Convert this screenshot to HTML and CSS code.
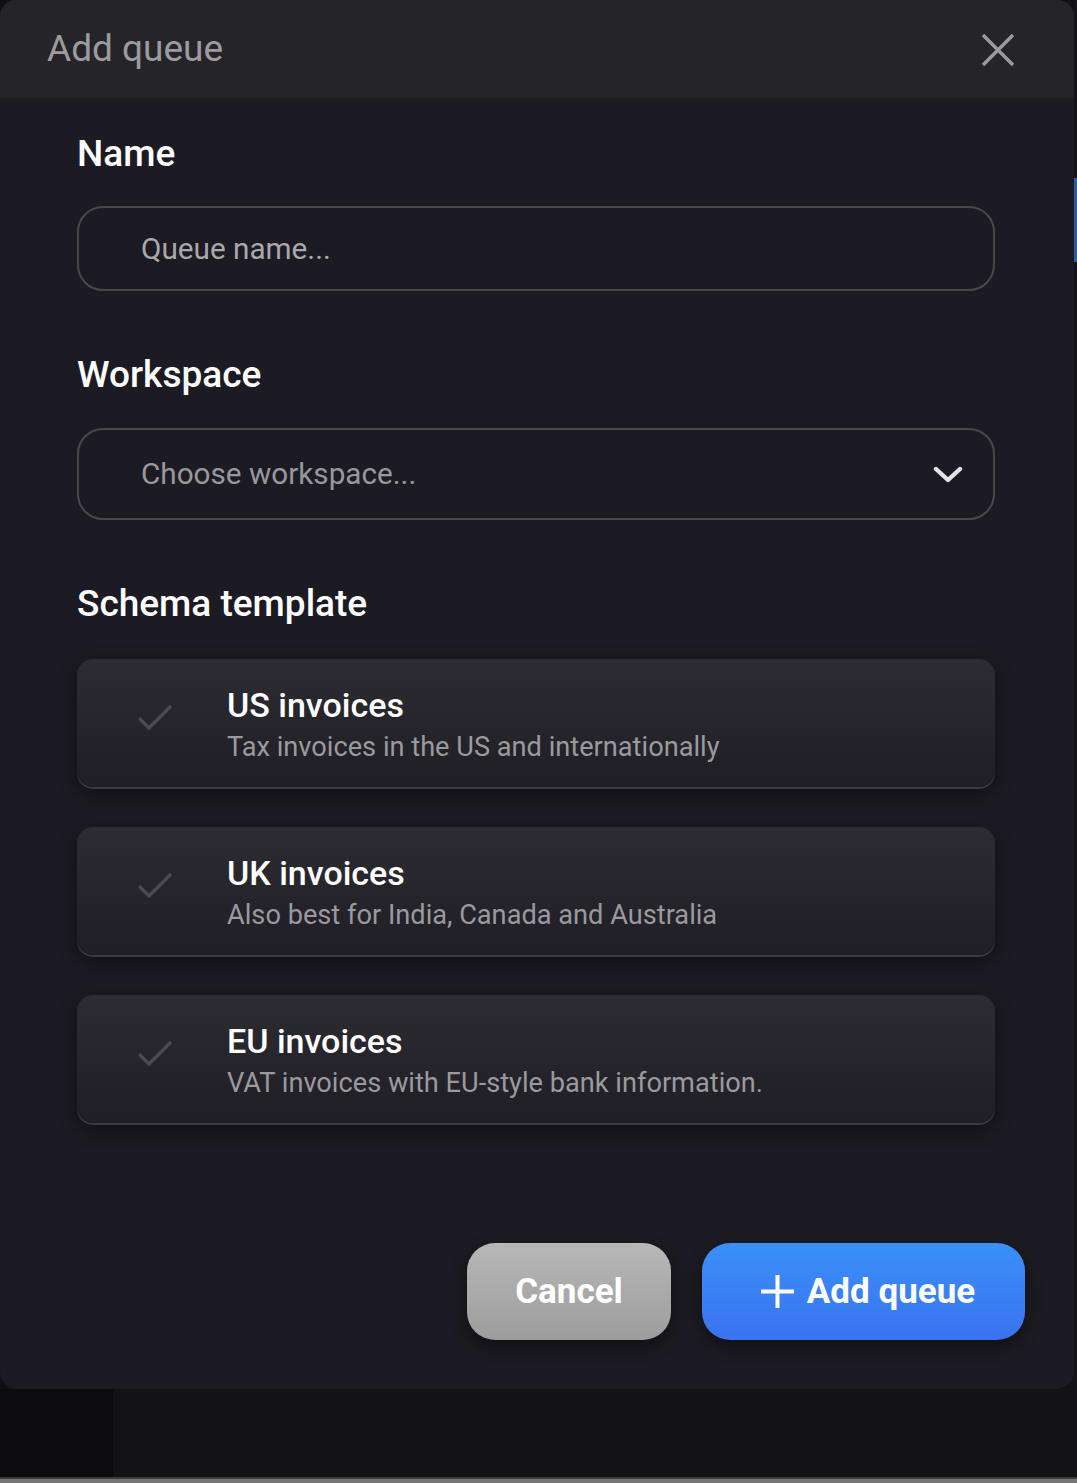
FILE: index.html
```html
<!DOCTYPE html>
<html lang="en">
<head>
<meta charset="utf-8">
<title>Add queue</title>
<link rel="stylesheet" href="styles.css">
</head>
<body>
<div class="screen">
  <div class="top-row">
    <div class="modal">
      <div class="modal-header">
        <h1 class="modal-title">Add queue</h1>
        <button class="close-btn" aria-label="Close">
          <svg width="34" height="34" viewBox="0 0 34 34"><path d="M2 2 L32 32 M32 2 L2 32" stroke="#9b9b9e" stroke-width="3.4" fill="none" stroke-linecap="butt"/></svg>
        </button>
      </div>
      <div class="modal-body">
        <label class="field-label label-name">Name</label>
        <div class="text-input"><span class="placeholder">Queue name...</span></div>

        <label class="field-label label-workspace">Workspace</label>
        <div class="text-input select-input">
          <span class="placeholder">Choose workspace...</span>
          <svg class="chevron" width="30" height="18" viewBox="0 0 30 18"><path d="M3 3 L15 14 L27 3" stroke="#e4e4e6" stroke-width="4.4" fill="none" stroke-linecap="round" stroke-linejoin="round"/></svg>
        </div>

        <label class="field-label label-schema">Schema template</label>
        <div class="cards">
          <div class="card">
            <svg class="check" width="36" height="30" viewBox="0 0 36 30"><path d="M2 15 L12 25 L34 3" stroke="#4a4a50" stroke-width="3.2" fill="none"/></svg>
            <div class="card-text">
              <div class="card-title">US invoices</div>
              <div class="card-sub">Tax invoices in the US and internationally</div>
            </div>
          </div>
          <div class="card">
            <svg class="check" width="36" height="30" viewBox="0 0 36 30"><path d="M2 15 L12 25 L34 3" stroke="#4a4a50" stroke-width="3.2" fill="none"/></svg>
            <div class="card-text">
              <div class="card-title">UK invoices</div>
              <div class="card-sub">Also best for India, Canada and Australia</div>
            </div>
          </div>
          <div class="card">
            <svg class="check" width="36" height="30" viewBox="0 0 36 30"><path d="M2 15 L12 25 L34 3" stroke="#4a4a50" stroke-width="3.2" fill="none"/></svg>
            <div class="card-text">
              <div class="card-title">EU invoices</div>
              <div class="card-sub">VAT invoices with EU-style bank information.</div>
            </div>
          </div>
        </div>
      </div>
      <div class="modal-footer">
        <button class="btn btn-cancel">Cancel</button>
        <button class="btn btn-primary">
          <svg class="plus" width="35" height="35" viewBox="0 0 35 35"><path d="M17.5 1 V34 M1 17.5 H34" stroke="#ffffff" stroke-width="4" fill="none"/></svg>
          <span>Add queue</span>
        </button>
      </div>
    </div>
    <div class="edge"><div class="edge-blue"></div></div>
  </div>
  <div class="bottom">
    <div class="bottom-left"></div>
    <div class="bottom-rest"></div>
  </div>
  <div class="bottom-line"></div>
</div>
</body>
</html>
```

FILE: styles.css
```css
* { box-sizing: border-box; }
html, body {
  margin: 0;
  padding: 0;
  background: #111114;
  font-family: Roboto, "Liberation Sans", Arial, sans-serif;
}
.screen {
  width: 1077px;
  height: 1483px;
  display: flex;
  flex-direction: column;
  overflow: hidden;
}
.top-row {
  display: flex;
  height: 1389px;
  flex: none;
}
.modal {
  width: 1074px;
  height: 1389px;
  flex: none;
  background: #1c1b23;
  border-radius: 16px 16px 18px 18px;
  display: flex;
  flex-direction: column;
  overflow: hidden;
}
.edge {
  flex: 1;
  background: #151419;
  padding-top: 178px;
}
.edge-blue {
  height: 84px;
  background: #2c5c9e;
}
.modal-header {
  height: 98px;
  flex: none;
  background: #252429;
  display: flex;
  align-items: center;
  justify-content: space-between;
  padding: 0 59px 0 47px;
}
.modal-title {
  margin: 0;
  font-size: 37px;
  font-weight: 400;
  color: #9c9c9f;
  line-height: 40px;
  margin-top: 0;
}
.close-btn {
  background: none;
  border: 0;
  padding: 0;
  width: 34px;
  height: 34px;
  display: flex;
  margin-top: 1px;
}
.modal-body {
  padding: 0 79px 0 77px;
  display: flex;
  flex-direction: column;
}
.field-label {
  display: block;
  color: #ffffff;
  font-size: 37px;
  font-weight: 500;
  line-height: 40px;
}
.label-name { margin-top: 36px; }
.label-workspace { margin-top: 64px; }
.label-schema { margin-top: 64px; }
.text-input {
  margin-top: 32px;
  height: 85px;
  border: 2px solid #48474d;
  border-radius: 26px;
  display: flex;
  align-items: center;
  padding: 0 30px 0 62px;
}
.select-input {
  margin-top: 33px;
  height: 92px;
  justify-content: space-between;
}
.placeholder {
  font-size: 29.7px;
  color: #a9a9ac;
  line-height: 34px;
}
.select-input .placeholder { color: #98989b; }
.chevron { margin-right: 0; margin-top: 2px; }
.cards {
  margin-top: 35px;
  display: flex;
  flex-direction: column;
  gap: 40px;
}
.card {
  height: 128px;
  border-radius: 16px;
  background: linear-gradient(180deg, #2d2c32 0%, #1f1e24 100%);
  box-shadow: 0 2px 0 #3a3940, 0 6px 18px rgba(0,0,0,0.45);
  display: flex;
  align-items: center;
  padding-left: 60px;
}
.check {
  flex: none;
  margin-top: -10px;
}
.card-text {
  margin-left: 54px;
  display: flex;
  flex-direction: column;
  margin-top: 2px;
}
.card-title {
  color: #ffffff;
  font-size: 34px;
  font-weight: 500;
  line-height: 40px;
}
.card-sub {
  color: #9a9a9e;
  font-size: 27.2px;
  line-height: 32px;
  margin-top: 6px;
}
.modal-footer {
  margin-top: auto;
  padding: 0 49px 49px 0;
  display: flex;
  justify-content: flex-end;
  gap: 31px;
}
.btn {
  height: 97px;
  border: 0;
  border-radius: 28px;
  font-family: Roboto, "Liberation Sans", Arial, sans-serif;
  font-size: 35px;
  font-weight: 700;
  color: #ffffff;
  display: flex;
  align-items: center;
  justify-content: center;
  box-shadow: 0 6px 16px rgba(0,0,0,0.45);
  padding: 0;
}
.btn-cancel {
  width: 204px;
  background: linear-gradient(180deg, #b7b7b7 0%, #9d9d9d 100%);
}
.btn-primary {
  width: 323px;
  background: linear-gradient(180deg, #3a90f8 0%, #3b72f0 100%);
  gap: 12px;
  padding-left: 8px;
}
.plus { flex: none; }
.bottom {
  height: 88px;
  flex: none;
  display: flex;
}
.bottom-left {
  width: 113px;
  background: #0c0c0e;
}
.bottom-rest {
  flex: 1;
  background: #131315;
}
.bottom-line {
  flex: 1;
  background: linear-gradient(180deg, #3a3a3c 0%, #3a3a3c 40%, #777 40%);
}
```
